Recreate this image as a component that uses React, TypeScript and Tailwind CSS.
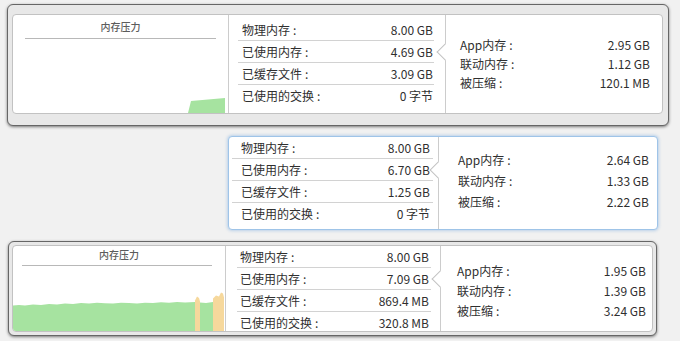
import React from 'react';

type Row = { label: string; value: string };

const font = "font-['Noto_Sans_CJK_SC','Noto_Sans',sans-serif]";

const snapshots = {
  idle: {
    usage: [
      { label: '物理内存', value: '8.00 GB' },
      { label: '已使用内存', value: '4.69 GB' },
      { label: '已缓存文件', value: '3.09 GB' },
      { label: '已使用的交换', value: '0 字节' },
    ],
    detail: [
      { label: 'App内存', value: '2.95 GB' },
      { label: '联动内存', value: '1.12 GB' },
      { label: '被压缩', value: '120.1 MB' },
    ],
  },
  busy: {
    usage: [
      { label: '物理内存', value: '8.00 GB' },
      { label: '已使用内存', value: '6.70 GB' },
      { label: '已缓存文件', value: '1.25 GB' },
      { label: '已使用的交换', value: '0 字节' },
    ],
    detail: [
      { label: 'App内存', value: '2.64 GB' },
      { label: '联动内存', value: '1.33 GB' },
      { label: '被压缩', value: '2.22 GB' },
    ],
  },
  swapping: {
    usage: [
      { label: '物理内存', value: '8.00 GB' },
      { label: '已使用内存', value: '7.09 GB' },
      { label: '已缓存文件', value: '869.4 MB' },
      { label: '已使用的交换', value: '320.8 MB' },
    ],
    detail: [
      { label: 'App内存', value: '1.95 GB' },
      { label: '联动内存', value: '1.39 GB' },
      { label: '被压缩', value: '3.24 GB' },
    ],
  },
};

// popover arrow pointing at the "已使用内存" row
const Arrow = ({ className }: { className: string }) => (
  <div className={`absolute w-[12px] h-[12px] rotate-45 bg-white border-l border-b border-[#c2c2c2] ${className}`} />
);

const Label = ({ text }: { text: string }) => (
  <span>
    {text}
    <span className="ml-[3px]">:</span>
  </span>
);

const UsageRows = ({ rows, rowClass }: { rows: Row[]; rowClass: string }) => (
  <>
    {rows.map((r, i) => (
      <div
        key={r.label}
        className={`flex items-center justify-between h-[22px] ${i < rows.length - 1 ? 'border-b border-[#d2d2d2]' : ''} ${rowClass}`}
      >
        <Label text={r.label} />
        <span>{r.value}</span>
      </div>
    ))}
  </>
);

const DetailRows = ({ rows, rowClass }: { rows: Row[]; rowClass: string }) => (
  <>
    {rows.map((r) => (
      <div key={r.label} className={`flex items-center justify-between ${rowClass}`}>
        <Label text={r.label} />
        <span>{r.value}</span>
      </div>
    ))}
  </>
);

const App = () => {
  return (
    <div className={`w-[680px] h-[341px] overflow-hidden bg-[#f1f1f1] flex flex-col text-[12px] text-[#2f2f2f] ${font}`}>
      {/* Panel 1: low pressure */}
      <div className="ml-[7px] mt-[4px] w-[662px] rounded-[6px] border border-[#666] bg-[#e8e8e8] pl-[4px] pt-[9px] pr-[5px] pb-[11px] shadow-[0_1px_3px_rgba(0,0,0,0.5)]">
        <div className="flex h-[100px] rounded-[4px] border border-[#c2c2c2] bg-white">
          <div className="w-[216px] border-r border-[#cccccc] flex flex-col">
            <div className="h-[22px] flex items-center justify-center text-[10px] font-medium text-[#5c5c5c]">内存压力</div>
            <div className="mt-[1px] mx-[12px] h-px bg-[#b8b8b8]" />
            <svg className="flex-1 w-full" viewBox="0 0 215 74" preserveAspectRatio="none">
              <path d="M175,74 L178,62 L212,59 L212,74 Z" fill="#a6e3a0" />
            </svg>
          </div>
          <div className="w-[217px] border-r border-[#cccccc] pt-[4px] pl-[9px] pr-[11px]">
            <UsageRows rows={snapshots.idle.usage} rowClass="pl-[4px] pr-[1px]" />
          </div>
          <div className="relative flex-1 flex flex-col justify-center pl-[14px] pr-[12px]">
            <Arrow className="top-[31px] left-[-7px]" />
            <DetailRows rows={snapshots.idle.detail} rowClass="h-[19px]" />
          </div>
        </div>
      </div>

      {/* Panel 2: selected state, no chart */}
      <div className="ml-[228px] mt-[10px] w-[430px] h-[94px] flex rounded-[4px] border border-[#9fc4e8] bg-white shadow-[0_0_3px_1px_rgba(120,170,225,0.45)]">
        <div className="w-[210px] border-r border-[#cccccc] pl-[3px] pr-[5px]">
          <UsageRows rows={snapshots.busy.usage} rowClass="pl-[9px] pr-[3px]" />
        </div>
        <div className="relative flex-1 flex flex-col justify-center pl-[19px] pr-[8px] pb-[5px]">
          <Arrow className="top-[27px] left-[-7px]" />
          <DetailRows rows={snapshots.busy.detail} rowClass="h-[21px]" />
        </div>
      </div>

      {/* Panel 3: pressure with swapping */}
      <div className="ml-[8px] mt-[11px] w-[649px] rounded-[6px] border border-[#666] bg-[#e8e8e8] p-[3px] shadow-[0_1px_3px_rgba(0,0,0,0.5)]">
        <div className="flex h-[87px] rounded-[4px] border border-[#c2c2c2] bg-white overflow-hidden">
          <div className="w-[213px] border-r border-[#cccccc] flex flex-col">
            <div className="h-[17px] flex items-center justify-center text-[10px] font-medium text-[#5c5c5c]">内存压力</div>
            <div className="mt-[2px] ml-[9px] mr-[13px] h-px bg-[#b8b8b8]" />
            <svg className="flex-1 w-full" viewBox="0 0 212 66" preserveAspectRatio="none">
              <path
                d="M0,66 L0,40 L6,39.5 L12,40 L20,39 L28,39.5 L36,38.5 L44,39 L52,38.2 L60,38.6 L68,37.6 L76,38.2 L84,37.2 L92,37.8 L100,38.2 L108,37.2 L116,37.6 L124,38.2 L132,37.2 L140,37.6 L148,36.8 L156,37.2 L164,36.6 L172,37 L182,36.6 L182,66 Z"
                fill="#a6e3a0"
              />
              <path d="M182,66 L182,35 L184,31 L186,32.5 L187,36 L187,66 Z" fill="#f6d89c" />
              <path d="M187,66 L187,37 L193,37.5 L200,36.5 L200,66 Z" fill="#a6e3a0" />
              <path d="M200,66 L200,33 L203,30 L206,31 L208,27 L210,28 L211,32 L211,66 Z" fill="#f6d89c" />
            </svg>
          </div>
          <div className="w-[215px] border-r border-[#cccccc] pl-[11px] pr-[9px]">
            <UsageRows rows={snapshots.swapping.usage} rowClass="pl-[3px] pr-[2px]" />
          </div>
          <div className="relative flex-1 flex flex-col justify-center pl-[16px] pr-[6px] pt-[4px]">
            <Arrow className="top-[27px] left-[-7px]" />
            <DetailRows rows={snapshots.swapping.detail} rowClass="h-[20px]" />
          </div>
        </div>
      </div>
    </div>
  );
};

export default App;
